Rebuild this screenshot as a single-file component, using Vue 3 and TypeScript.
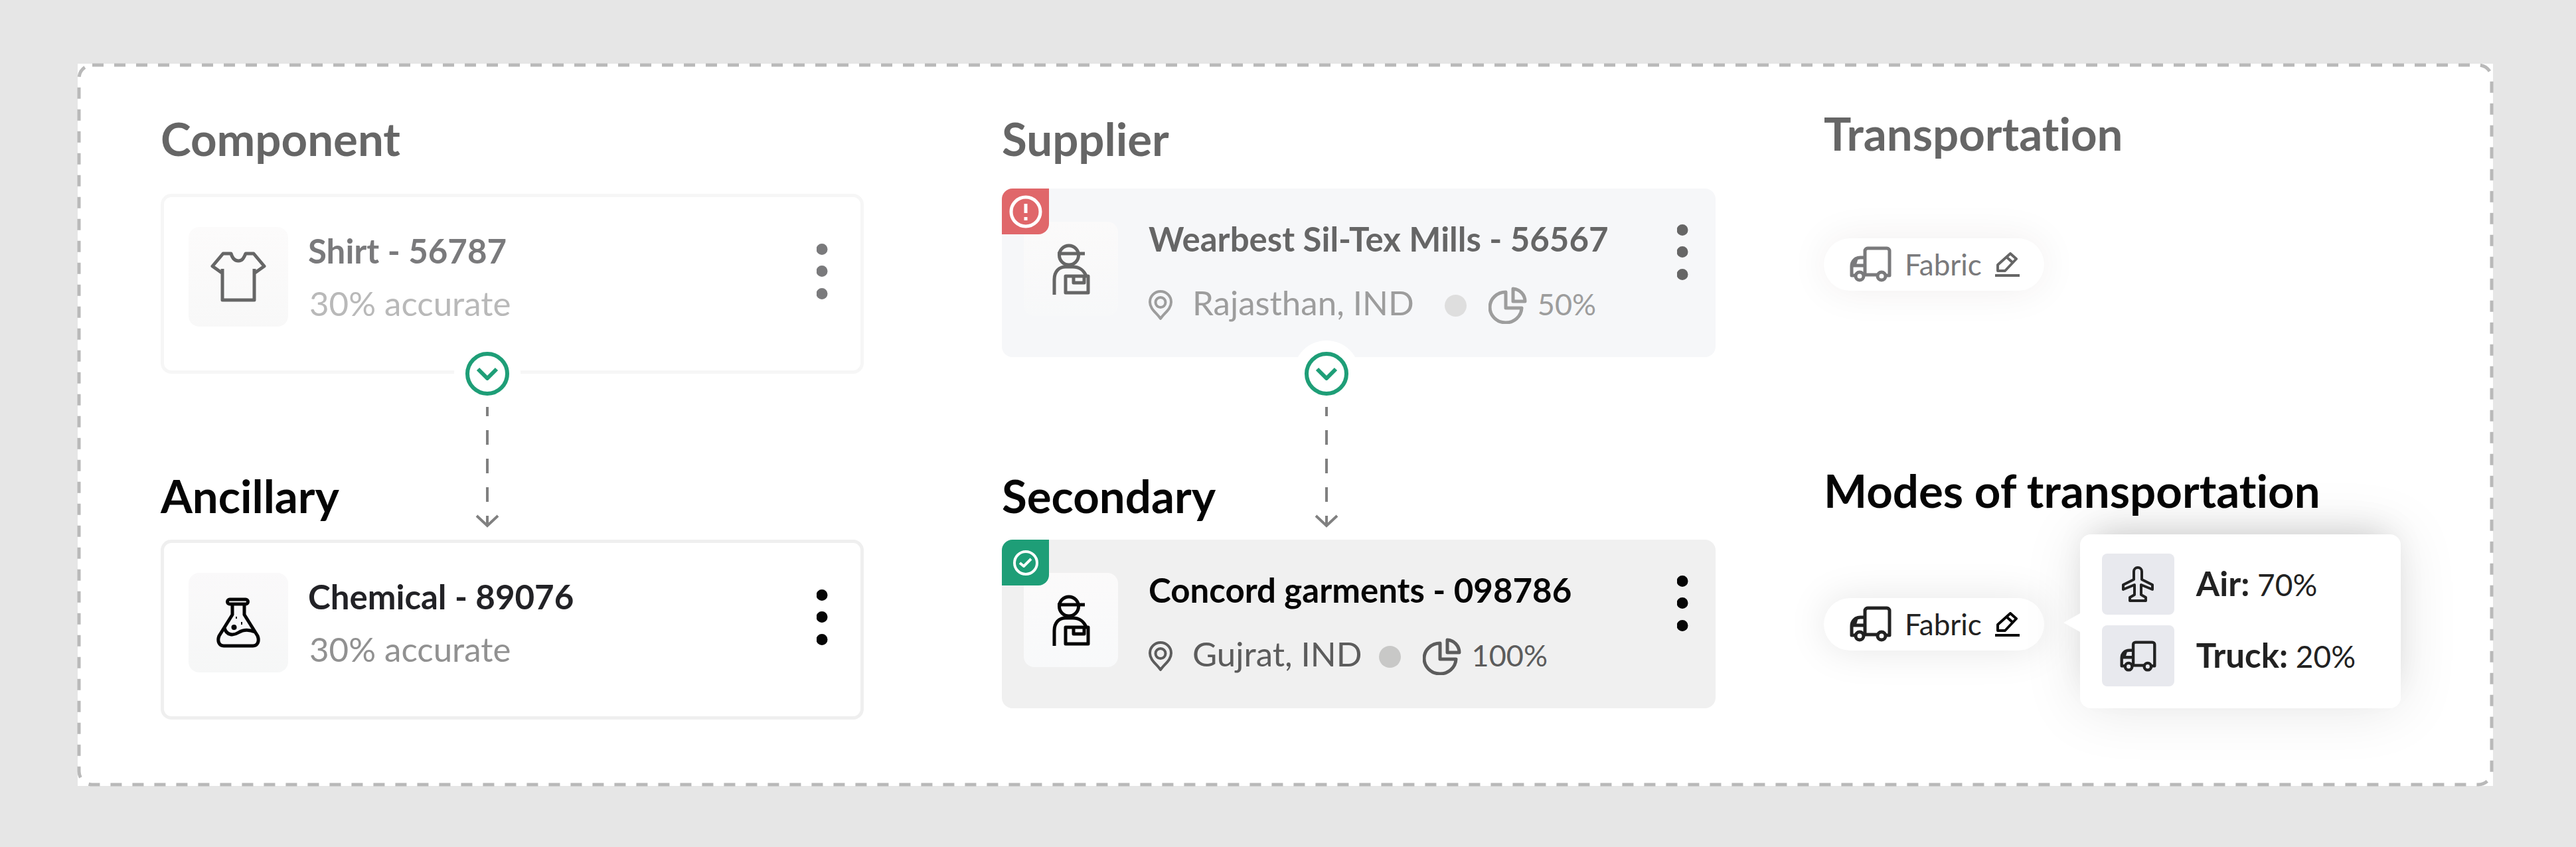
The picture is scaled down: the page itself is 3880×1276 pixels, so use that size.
<script setup lang="ts">
import { h } from 'vue'

interface Glyph {
  w: number
  h: number
  stroke: number
  paths: string[]
  fill?: string
}

const glyphs: Record<string, Glyph> = {
  shirt: {
    w: 84, h: 76, stroke: 5,
    paths: ['M17 32L3 22L19 3H31C33 10 36 14 42 14S50 10 53 3H65L81 22L67 32', 'M18 26V73H66V26'],
  },
  flask: {
    w: 66, h: 76, stroke: 5,
    paths: [
      'M20 3H44a3 3 0 0 1 0 7H20a3 3 0 0 1 0-7z',
      'M24 10V26L4 58C1 66 4 73 11 73H55C62 73 65 66 62 58L42 26V10',
      'M12 46C15 57 25 58 33 53S49 48 58 52',
    ],
    fill: 'M26 41a4 4 0 1 0 1 8a4 4 0 1 0-1-8zM37 37h2v4h-2zM29 29h2v3h-2z',
  },
  courier: {
    w: 57, h: 77, stroke: 5,
    paths: [
      'M25 3a14 14 0 1 1 0 29a14 14 0 1 1 0-29z',
      'M8 15H49',
      'M3 77V54C3 42 10 35 20 35H31C41 35 48 41 51 49',
      'M20 49H54V74H20z',
      'M32 49V59H48V49',
    ],
  },
  pin: {
    w: 36, h: 46, stroke: 4,
    paths: ['M18 43C13 35 2 29 2 18a16 16 0 0 1 32 0C34 29 23 35 18 43z', 'M18 11a7 7 0 1 1 0 15a7 7 0 1 1 0-15z'],
  },
  pie: {
    w: 58, h: 56, stroke: 5,
    paths: ['M26 8V32H50A24 23 0 1 1 26 8z', 'M37 3V22H55A19 19 0 0 0 37 3z'],
  },
  truck: {
    w: 63, h: 54, stroke: 5,
    paths: [
      'M8 44H3V30C3 22 9 17 16 17H23',
      'M3 29H23M10 19L7 29',
      'M23 42V7a4 4 0 0 1 4-4H56a4 4 0 0 1 4 4V44H55',
      'M21 43H42',
      'M15 39a6 6 0 1 1 0 12a6 6 0 1 1 0-12z',
      'M48 39a6 6 0 1 1 0 12a6 6 0 1 1 0-12z',
    ],
  },
  pencil: {
    w: 37, h: 37, stroke: 4,
    paths: ['M4 28V19L23 2L32 10L15 28Z', 'M17 7L27 16', 'M0 35H37'],
  },
  plane: {
    w: 48, h: 54, stroke: 4,
    paths: ['M18 20V8a6 6 0 0 1 12 0V20L46 28V35L29 28V43L36 47V52H12V47L19 43V28L2 35V28Z'],
  },
  alert: {
    w: 50, h: 50, stroke: 5,
    paths: ['M25 3a22 22 0 1 1 0 44a22 22 0 1 1 0-44z', 'M25 13V27', 'M25 33V38'],
  },
  check: {
    w: 38, h: 38, stroke: 4,
    paths: ['M19 2a17 17 0 1 1 0 34a17 17 0 1 1 0-34z', 'M10 19L16 24L27 13'],
  },
  chevron: { w: 34, h: 20, stroke: 6, paths: ['M3 3L17 17L31 3'] },
  more: {
    w: 17, h: 84, stroke: 0, paths: [],
    fill: 'M8 0a8 8 0 1 1 0 17a8 8 0 1 1 0-17zM8 33a8 8 0 1 1 0 17a8 8 0 1 1 0-17zM8 67a8 8 0 1 1 0 17a8 8 0 1 1 0-17z',
  },
}

const Icon = (props: { name: string; width?: number }) => {
  const g = glyphs[props.name]
  const width = props.width ?? g.w
  return h(
    'svg',
    {
      width,
      height: Math.round((g.h * width) / g.w),
      viewBox: `0 0 ${g.w} ${g.h}`,
      fill: 'none',
      stroke: 'currentColor',
      'stroke-width': g.stroke,
      'stroke-linejoin': 'round',
      'aria-hidden': 'true',
    },
    [
      ...g.paths.map((d) => h('path', { d })),
      g.fill ? h('path', { d: g.fill, fill: 'currentColor', stroke: 'none' }) : null,
    ],
  )
}
Icon.props = ['name', 'width']

const components = [
  { heading: 'Component', title: 'Shirt - 56787', note: '30% accurate', icon: 'shirt', faded: true },
  { heading: 'Ancillary', title: 'Chemical - 89076', note: '30% accurate', icon: 'flask', faded: false },
]
const suppliers = [
  { heading: 'Supplier', title: 'Wearbest Sil-Tex Mills - 56567', place: 'Rajasthan, IND', share: '50%', badge: 'alert', faded: true },
  { heading: 'Secondary', title: 'Concord garments - 098786', place: 'Gujrat, IND', share: '100%', badge: 'check', faded: false },
]
const transports = [
  { heading: 'Transportation', material: 'Fabric', faded: true, modes: [] },
  {
    heading: 'Modes of transportation', material: 'Fabric', faded: false,
    modes: [
      { icon: 'plane', width: 48, label: 'Air:', share: '70%' },
      { icon: 'truck', width: 55, label: 'Truck:', share: '20%' },
    ],
  },
]
</script>

<template>
  <main class="board">
    <svg class="outline" aria-hidden="true"><rect width="100%" height="100%" rx="20" /></svg>

    <section class="column column--component">
      <div v-for="c in components" :key="c.heading" class="group" :class="{ faded: c.faded }">
        <h2>{{ c.heading }}</h2>
        <article class="card card--component">
          <div class="thumb"><Icon :name="c.icon" /></div>
          <div class="text">
            <h3>{{ c.title }}</h3>
            <p class="note">{{ c.note }}</p>
          </div>
          <button class="more" type="button" :aria-label="`Options for ${c.title}`"><Icon name="more" /></button>
        </article>
      </div>
      <div class="connector">
        <button class="expand" type="button" aria-label="Expand component"><Icon name="chevron" /></button>
        <svg class="arrow" width="36" height="182" viewBox="0 0 36 182" aria-hidden="true">
          <path class="dash" d="M18 0V180" />
          <path d="M2 164L18 179L34 164" />
        </svg>
      </div>
    </section>

    <section class="column column--supplier">
      <div v-for="s in suppliers" :key="s.heading" class="group" :class="{ faded: s.faded }">
        <h2>{{ s.heading }}</h2>
        <article class="card card--supplier">
          <span class="badge" :class="`badge--${s.badge}`"><Icon :name="s.badge" /></span>
          <div class="thumb"><Icon name="courier" /></div>
          <div class="text">
            <h3>{{ s.title }}</h3>
            <p class="meta">
              <Icon name="pin" />
              <span class="place">{{ s.place }}</span>
              <span class="dot"></span>
              <Icon name="pie" />
              <span class="share">{{ s.share }}</span>
            </p>
          </div>
          <button class="more" type="button" :aria-label="`Options for ${s.title}`"><Icon name="more" /></button>
        </article>
      </div>
      <div class="connector">
        <button class="expand" type="button" aria-label="Expand supplier"><Icon name="chevron" /></button>
        <svg class="arrow" width="36" height="182" viewBox="0 0 36 182" aria-hidden="true">
          <path class="dash" d="M18 0V180" />
          <path d="M2 164L18 179L34 164" />
        </svg>
      </div>
    </section>

    <section class="column column--transport">
      <div v-for="t in transports" :key="t.heading" class="group" :class="{ faded: t.faded }">
        <h2>{{ t.heading }}</h2>
        <div class="pill">
          <Icon name="truck" />
          <span>{{ t.material }}</span>
          <button class="edit" type="button" :aria-label="`Edit ${t.material}`"><Icon name="pencil" /></button>
          <ul v-if="t.modes.length" class="tooltip">
            <li v-for="m in t.modes" :key="m.label">
              <span class="tile"><Icon :name="m.icon" :width="m.width" /></span>
              <span><b>{{ m.label }}</b> {{ m.share }}</span>
            </li>
          </ul>
        </div>
      </div>
    </section>
  </main>
</template>

<style>
body {
  background: #e6e6e6;
}
</style>

<style scoped>
.board {
  position: relative;
  display: grid;
  grid-template-columns: 1267fr 1238fr 1008fr;
  align-items: start;
  margin: 96px 125px 92px 117px;
  padding: 72px 0 100px 125px;
  background: #fff;
  color: #050505;
  font-family: Lato, 'Liberation Sans', sans-serif;
  font-variant-ligatures: none;
}
.outline {
  position: absolute;
  inset: 2px;
  width: calc(100% - 4px);
  height: calc(100% - 4px);
  overflow: visible;
  fill: none;
  stroke: #b9b9b9;
  stroke-width: 5;
  stroke-dasharray: 17 16;
  pointer-events: none;
}
h2, h3, p, ul {
  margin: 0;
  padding: 0;
}
h2 {
  font-size: 69px;
  line-height: 82px;
  font-weight: 700;
}
h3 {
  font-size: 51px;
  line-height: 60px;
  font-weight: 700;
}
svg {
  flex: none;
  display: block;
}
button {
  display: flex;
  align-items: center;
  justify-content: center;
  padding: 0;
  border: 0;
  background: none;
  color: inherit;
  cursor: pointer;
}

.column {
  position: relative;
  display: grid;
  grid-template-rows: minmax(538px, auto) auto;
}
.column--component {
  margin-right: 208px;
}
.column--supplier {
  margin-right: 163px;
}
.column--transport {
  margin-top: -8px;
}
.column--component h2,
.column--supplier h2 {
  margin-bottom: 25px;
}
.column--component .faded h2 {
  margin-bottom: 42px;
}
.column--supplier .faded h2 {
  margin-bottom: 34px;
}
.column--transport h2 {
  margin-bottom: 121px;
}
.column--transport .faded h2 {
  margin-bottom: 117px;
}
.faded {
  color: #666;
}

.card {
  position: relative;
  display: flex;
  align-items: flex-start;
  border-radius: 16px;
}
.card--component {
  gap: 30px;
  padding: 45px 37px 66px;
  border: 5px solid #efefef;
}
.faded .card--component {
  border-color: #f6f6f6;
}
.card--supplier {
  gap: 46px;
  padding: 46px 29px 48px 33px;
  background: #f0f0f0;
}
.faded .card--supplier {
  background: #f6f7f9;
}
.thumb {
  flex: none;
  display: flex;
  align-items: center;
  justify-content: center;
  width: 150px;
  height: 150px;
  border-radius: 16px;
  background: linear-gradient(#faf9fa, #f6f7f7);
}
.faded .thumb {
  background: linear-gradient(#fcfbfb, #f8f8f8);
}
.card--supplier .thumb {
  width: 142px;
  height: 142px;
  margin-top: 4px;
  background: linear-gradient(#fbfafa, #f8f9fa);
}
.faded .card--supplier .thumb {
  background: linear-gradient(#fbfafa, #f7f8f9);
}
.text {
  flex: 1;
  display: flex;
  flex-direction: column;
}
.card--component .text {
  gap: 19px;
  padding-top: 6px;
}
.card--supplier .text {
  gap: 40px;
}
.card--component h3 {
  color: #222226;
}
.faded .card--component h3,
.faded .card--component .more {
  color: #7a7a7c;
}
.note {
  font-size: 51px;
  line-height: 60px;
  color: #919191;
  padding-left: 2px;
}
.faded .note {
  color: #b9b9b9;
}
.meta {
  display: flex;
  align-items: center;
  height: 60px;
  color: #5c5c5c;
}
.faded .meta {
  color: #9d9d9d;
}
.place {
  margin: 0 25px 0 30px;
  padding-bottom: 8px;
  font-size: 51px;
  line-height: 60px;
}
.faded .place {
  margin-right: 46px;
}
.dot {
  width: 33px;
  height: 33px;
  margin-right: 33px;
  border-radius: 50%;
  background: #c8c8c7;
}
.faded .dot {
  background: #dedede;
}
.share {
  margin-left: 16px;
  padding-bottom: 4px;
  font-size: 45px;
  line-height: 60px;
}
.more {
  flex: none;
  width: 42px;
  height: 134px;
}
.card--supplier .more {
  height: 100px;
}

.badge {
  position: absolute;
  top: 0;
  left: 0;
  display: flex;
  align-items: center;
  justify-content: center;
  width: 71px;
  height: 69px;
  border-radius: 16px 0;
  color: #fff;
}
.badge--alert {
  background: #e0676a;
}
.badge--check {
  background: #1e9e77;
}

.connector {
  position: absolute;
  top: 362px;
  left: calc(46% + 5px);
  display: flex;
  flex-direction: column;
  align-items: center;
  gap: 17px;
  transform: translateX(-50%);
}
.column--supplier .connector {
  left: calc(46% - 6px);
}
.expand {
  width: 66px;
  height: 66px;
  border: 6px solid #1e9e77;
  border-radius: 50%;
  background: #fff;
  box-shadow: 0 0 0 17px #fff;
  color: #1e9e77;
}
.arrow {
  fill: none;
  stroke: #808080;
  stroke-width: 4;
}
.dash {
  stroke-dasharray: 22 21;
  stroke-dashoffset: 8;
}

.pill {
  position: relative;
  display: flex;
  align-items: center;
  gap: 20px;
  width: max-content;
  padding: 9px 37px 10px 39px;
  border-radius: 40px;
  background: #fff;
  box-shadow: 0 0 60px rgba(0, 0, 0, 0.1);
  color: #222;
  font-size: 44px;
  line-height: 60px;
}
.faded .pill {
  box-shadow: 0 0 60px rgba(60, 0, 20, 0.07);
  color: #7a7a7c;
}
.edit {
  color: #050505;
}
.faded .edit {
  color: #666;
}

.tooltip {
  position: absolute;
  top: -96px;
  left: calc(100% + 54px);
  display: flex;
  flex-direction: column;
  gap: 16px;
  padding: 29px 68px 33px 33px;
  border-radius: 16px;
  background: #fff;
  box-shadow: 0 0 90px rgba(0, 0, 0, 0.1), 0 -20px 50px -20px rgba(0, 0, 0, 0.16);
  font-size: 46px;
  list-style: none;
  white-space: nowrap;
}
.tooltip::before {
  content: '';
  position: absolute;
  top: 119px;
  right: 100%;
  border: solid transparent;
  border-width: 14px 25px 14px 0;
  border-right-color: #fff;
}
.tooltip li {
  display: flex;
  align-items: center;
  gap: 33px;
}
.tooltip b {
  font-size: 51px;
}
.tile {
  display: flex;
  align-items: center;
  justify-content: center;
  width: 109px;
  height: 92px;
  border-radius: 8px;
  background: #e8e9ee;
}
</style>
